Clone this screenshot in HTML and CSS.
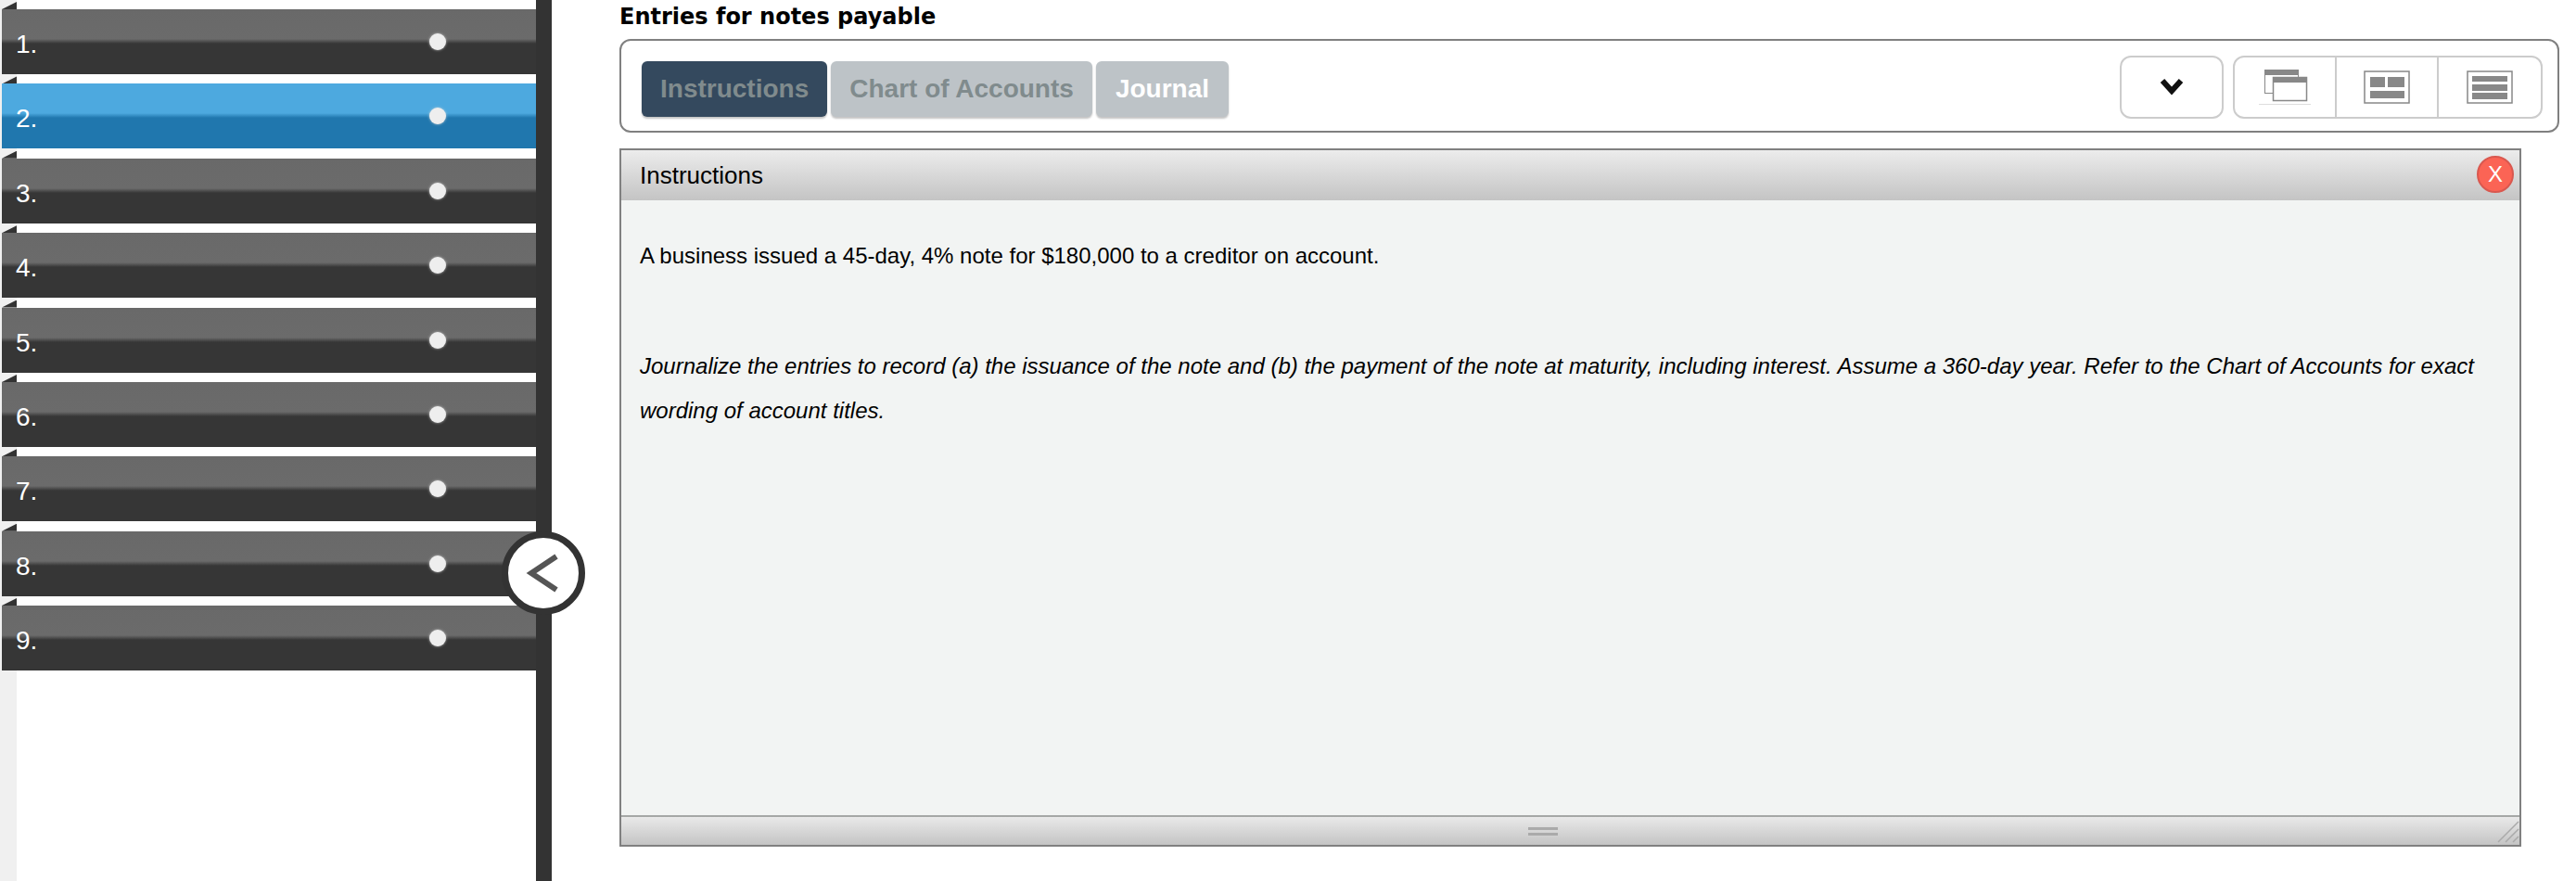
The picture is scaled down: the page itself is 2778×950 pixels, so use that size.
FILE: index.html
```html
<!DOCTYPE html>
<html>
  <head>
    <title>Entries for notes payable</title>
    <link rel="stylesheet" href="styles.css">
  </head>
  <body>
    <div class="sidebar">
      <div class="step"><span class="step-number">1.</span><span class="step-dot"></span></div>
      <div class="step step-active"><span class="step-number">2.</span><span class="step-dot"></span></div>
      <div class="step"><span class="step-number">3.</span><span class="step-dot"></span></div>
      <div class="step"><span class="step-number">4.</span><span class="step-dot"></span></div>
      <div class="step"><span class="step-number">5.</span><span class="step-dot"></span></div>
      <div class="step"><span class="step-number">6.</span><span class="step-dot"></span></div>
      <div class="step"><span class="step-number">7.</span><span class="step-dot"></span></div>
      <div class="step"><span class="step-number">8.</span><span class="step-dot"></span></div>
      <div class="step"><span class="step-number">9.</span><span class="step-dot"></span></div>

      <button class="collapse-button">
        <svg width="40" height="44" viewBox="0 0 40 44">
          <path d="M34 4 L7 22 L34 40" fill="none" stroke="#555" stroke-width="6"/>
        </svg>
      </button>
    </div>

    <div class="main">
      <p class="title">Entries for notes payable</p>

      <div class="toolbar">
        <button class="tab tab-active">Instructions</button>
        <button class="tab">Chart of Accounts</button>
        <button class="tab tab-journal">Journal</button>

        <button class="dropdown-button">
          <svg width="26" height="21" viewBox="0 0 26 21">
            <path d="M3 3 L13 14 L23 3" fill="none" stroke="#111" stroke-width="6"/>
          </svg>
        </button>

        <div class="view-buttons">
          <button class="view-button">
            <svg width="56" height="40" viewBox="0 0 56 40">
              <rect x="6.5" y="1.5" width="36" height="25" fill="#fff" stroke="#888"/>
              <rect x="6" y="1" width="37" height="6" fill="#888"/>
              <rect x="15.5" y="9.5" width="36" height="25" fill="#fff" stroke="#888" stroke-width="1.5"/>
              <rect x="15" y="9" width="37" height="6" fill="#888"/>
              <rect x="0" y="38" width="56" height="1" fill="#ddd"/>
            </svg>
          </button>
          <button class="view-button">
            <svg width="50" height="36" viewBox="0 0 50 36">
              <rect x="1" y="1" width="48" height="34" fill="#fff" stroke="#888" stroke-width="1.5"/>
              <rect x="7" y="7" width="16" height="11" fill="#888"/>
              <rect x="26" y="7" width="18" height="11" fill="#888"/>
              <rect x="7" y="22" width="37" height="8" fill="#888"/>
            </svg>
          </button>
          <button class="view-button">
            <svg width="50" height="36" viewBox="0 0 50 36">
              <rect x="1" y="1" width="48" height="34" fill="#fff" stroke="#888" stroke-width="1.5"/>
              <rect x="6" y="6" width="38" height="6" fill="#888"/>
              <rect x="6" y="15" width="38" height="7" fill="#888"/>
              <rect x="6" y="24" width="38" height="7" fill="#888"/>
            </svg>
          </button>
        </div>
      </div>

      <div class="panel">
        <div class="panel-header">
          <span>Instructions</span>
          <button class="close-button">X</button>
        </div>

        <div class="panel-body">
          <p class="panel-text">A business issued a 45-day, 4% note for $180,000 to a creditor on account.</p>
          <p class="panel-text panel-text-italic">Journalize the entries to record (a) the issuance of the note and (b) the payment of the note at maturity, including interest. Assume a 360-day year. Refer to the Chart of Accounts for exact wording of account titles.</p>
        </div>

        <div class="panel-footer">
          <span class="grip"></span>
          <svg class="resize-lines" width="24" height="24" viewBox="0 0 24 24">
            <path d="M1 23 L23 1 M9 23 L23 9 M17 23 L23 17" fill="none" stroke="#aaa" stroke-width="1.5"/>
          </svg>
        </div>
      </div>
    </div>
  </body>
</html>
```

FILE: styles.css
```css
body {
  margin: 0;
  height: 950px;
  overflow: hidden;
  display: flex;
  background-color: white;
  color: black;
  font-family: "Liberation Sans", Arial, sans-serif;
}

button {
  font-family: inherit;
  cursor: pointer;
}

.sidebar {
  position: relative;
  box-sizing: border-box;
  width: 595px;
  flex-shrink: 0;
  padding-top: 10px;
  display: flex;
  flex-direction: column;
  gap: 10.375px;
  border-right: 17px solid #333333;
  background: linear-gradient(to right, #f0f0f0 18px, white 18px);
}

.step {
  position: relative;
  display: flex;
  flex-shrink: 0;
  height: 70px;
  margin-left: 2px;
  background: linear-gradient(#696969 0, #6b6b6b 32px, #363636 37px, #363636 100%);
}

.step::before {
  content: "";
  position: absolute;
  left: 0;
  top: -8px;
  width: 16px;
  height: 8px;
  background-color: #333333;
  clip-path: polygon(0 100%, 100% 0, 100% 100%);
}

.step-active {
  background: linear-gradient(#4da9df 0, #4da9df 32px, #2077ae 37px, #2077ae 100%);
}

.step-number {
  width: 446px;
  padding-left: 15px;
  padding-top: 23px;
  font-size: 28px;
  line-height: 30px;
  color: white;
}

.step-dot {
  width: 18px;
  height: 18px;
  margin-top: 26px;
  border-radius: 50%;
  background-color: #eeeeee;
  box-shadow: 0 0 3px rgba(215, 215, 215, 0.8);
}

.collapse-button {
  position: absolute;
  left: 541px;
  top: 573px;
  width: 90px;
  height: 90px;
  padding: 0;
  display: flex;
  align-items: center;
  justify-content: center;
  border: 7px solid #333333;
  border-radius: 50%;
  background-color: white;
}

.main {
  flex-grow: 1;
  padding-left: 73px;
  padding-right: 18px;
}

.title {
  margin: 5px 0 0;
  font-family: "DejaVu Sans", Verdana, sans-serif;
  font-size: 24px;
  line-height: 27px;
  font-weight: bold;
}

.toolbar {
  box-sizing: border-box;
  height: 101px;
  margin-top: 10px;
  padding: 22px 16px 0 22px;
  display: flex;
  align-items: flex-start;
  gap: 4px;
  border: 2px solid #808080;
  border-radius: 12px;
}

.tab {
  height: 60px;
  padding: 0 20px;
  border: none;
  border-radius: 6px;
  font-size: 28px;
  font-weight: bold;
  color: #808b8d;
  background-color: #bdc3c7;
  box-shadow: 0 2px 2px #c4c4c4;
}

.tab-active {
  background-color: #34495e;
}

.tab-journal {
  padding: 0 21px;
  color: white;
}

.dropdown-button {
  box-sizing: border-box;
  width: 112px;
  height: 68px;
  margin-left: auto;
  margin-top: -6px;
  margin-right: 6px;
  padding: 0;
  display: flex;
  align-items: center;
  justify-content: center;
  border: 2px solid #cccccc;
  border-radius: 12px;
  background-color: white;
}

.view-buttons {
  box-sizing: border-box;
  height: 68px;
  margin-top: -6px;
  display: flex;
  border: 2px solid #cccccc;
  border-radius: 12px;
}

.view-button {
  width: 110px;
  padding: 0;
  display: flex;
  align-items: center;
  justify-content: center;
  border: none;
  border-right: 2px solid #cccccc;
  background-color: transparent;
}

.view-button:last-child {
  border-right: none;
}

.panel {
  box-sizing: border-box;
  width: 2051px;
  height: 753px;
  margin-top: 17px;
  display: flex;
  flex-direction: column;
  border: 2px solid #808080;
  background-color: #f2f4f3;
}

.panel-header {
  height: 54px;
  flex-shrink: 0;
  padding: 0 6px 0 20px;
  display: flex;
  align-items: center;
  justify-content: space-between;
  font-size: 26px;
  background: linear-gradient(#ececec, #c4c4c4);
}

.close-button {
  width: 40px;
  height: 40px;
  padding: 0;
  margin-top: -3px;
  border: 2px solid #d9584f;
  border-radius: 50%;
  font-size: 24px;
  color: white;
  background-color: #fb6455;
}

.panel-body {
  flex-grow: 1;
  padding: 36px 20px 0;
}

.panel-text {
  margin: 0 0 71px;
  font-size: 24px;
  line-height: 48px;
}

.panel-text-italic {
  font-style: italic;
}

.panel-footer {
  position: relative;
  height: 30px;
  flex-shrink: 0;
  display: flex;
  align-items: center;
  justify-content: center;
  border-top: 2px solid #a5a8a6;
  background: linear-gradient(#e9e9e9, #c4c4c4);
}

.grip {
  width: 32px;
  height: 3px;
  margin-right: 60px;
  border-top: 3px solid #aaaaaa;
  border-bottom: 3px solid #aaaaaa;
}

.resize-lines {
  position: absolute;
  right: 0;
  bottom: 2px;
}
```
